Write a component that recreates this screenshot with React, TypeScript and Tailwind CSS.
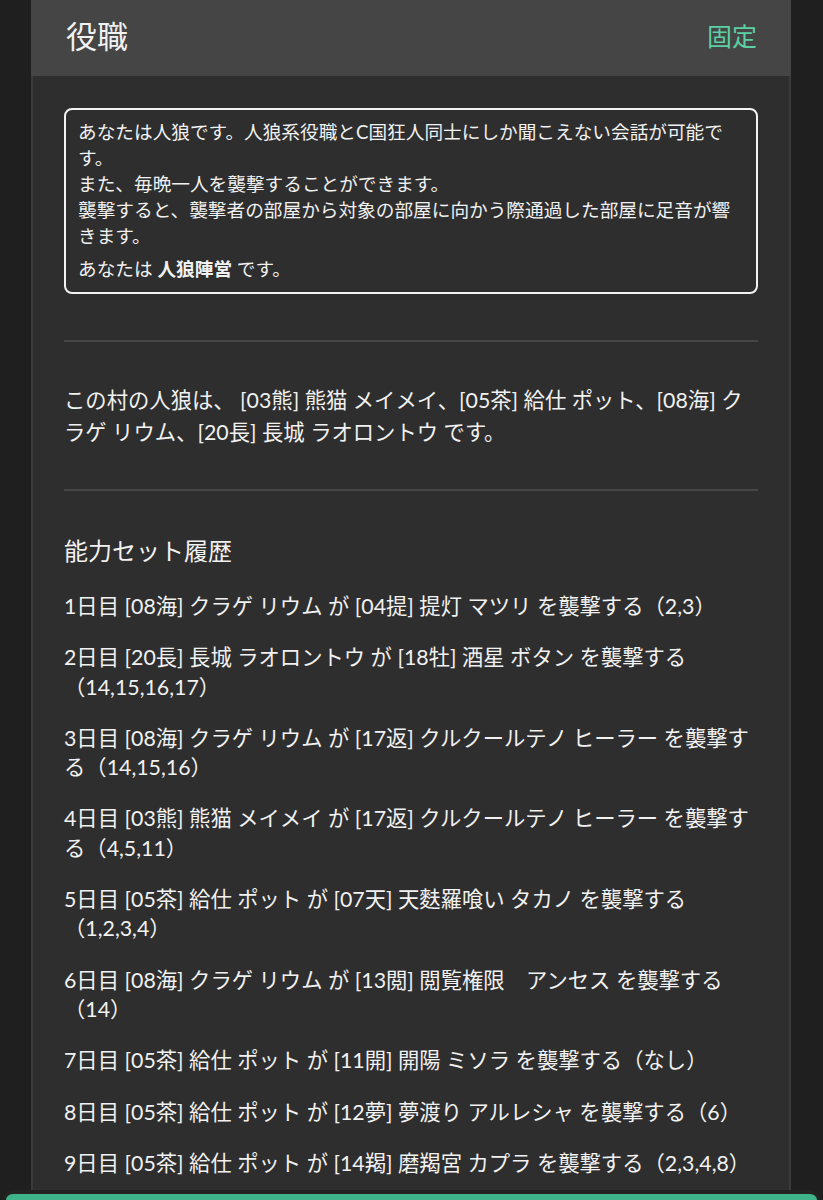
const attackHistory = [
  "1日目 [08海] クラゲ リウム が [04提] 提灯 マツリ を襲撃する（2,3）",
  "2日目 [20長] 長城 ラオロントウ が [18牡] 酒星 ボタン を襲撃する（14,15,16,17）",
  "3日目 [08海] クラゲ リウム が [17返] クルクールテノ ヒーラー を襲撃する（14,15,16）",
  "4日目 [03熊] 熊猫 メイメイ が [17返] クルクールテノ ヒーラー を襲撃する（4,5,11）",
  "5日目 [05茶] 給仕 ポット が [07天] 天麩羅喰い タカノ を襲撃する（1,2,3,4）",
  "6日目 [08海] クラゲ リウム が [13閲] 閲覧権限　アンセス を襲撃する（14）",
  "7日目 [05茶] 給仕 ポット が [11開] 開陽 ミソラ を襲撃する（なし）",
  "8日目 [05茶] 給仕 ポット が [12夢] 夢渡り アルレシャ を襲撃する（6）",
  "9日目 [05茶] 給仕 ポット が [14羯] 磨羯宮 カプラ を襲撃する（2,3,4,8）",
];

function RoleDescription() {
  return (
    <section className="rounded-[8px] border-2 border-[#f2f2f2] px-[12px] pt-[9px] pb-[10px] text-[18.67px] leading-[26px]">
      <p>
        あなたは人狼です。人狼系役職とC国狂人同士にしか聞こえない会話が可能です。
        <br />
        また、毎晩一人を襲撃することができます。
        <br />
        襲撃すると、襲撃者の部屋から対象の部屋に向かう際通過した部屋に足音が響きます。
      </p>
      <p className="mt-[7px]">
        あなたは <span className="font-bold">人狼陣営</span> です。
      </p>
    </section>
  );
}

export default function App() {
  return (
    <div className="relative h-[1200px] overflow-hidden bg-[#1f1f1f] font-['Lato','Noto_Sans_CJK_JP',sans-serif] text-[#f1f1f1]">
      <div className="ml-[31px] flex h-full w-[760px] flex-col">
        <header className="flex h-[76px] shrink-0 items-center justify-between bg-[#454545] pr-[34px] pb-[4px] pl-[35px]">
          <h1 className="text-[31px] leading-none">役職</h1>
          <button type="button" className="text-[25px] leading-none text-[#5ccfa3]">
            固定
          </button>
        </header>

        <main className="flex-1 border-x-2 border-[#3b3b3b] bg-[#2e2e2e] px-[31px] pt-[32px]">
          <RoleDescription />

          <hr className="mt-[46px] border-t-2 border-[#464646]" />

          <p className="mt-[42px] text-[21.33px] leading-[32px]">
            この村の人狼は、 [03熊] 熊猫 メイメイ、[05茶] 給仕 ポット、[08海] クラゲ リウム、[20長] 長城 ラオロントウ です。
          </p>

          <hr className="mt-[41px] border-t-2 border-[#464646]" />

          <h2 className="mt-[42px] text-[24px] leading-[36px]">能力セット履歴</h2>

          <ul className="mt-[23px] flex flex-col gap-[22px] text-[21.33px] leading-[29.3px]">
            {attackHistory.map((entry) => (
              <li key={entry}>{entry}</li>
            ))}
          </ul>
        </main>
      </div>

      <div className="absolute inset-x-[3px] bottom-0 h-[10px] rounded-t-[10px] border-x-[3px] border-t-[4px] border-[#232323] bg-[#3fb389]" />
    </div>
  );
}
